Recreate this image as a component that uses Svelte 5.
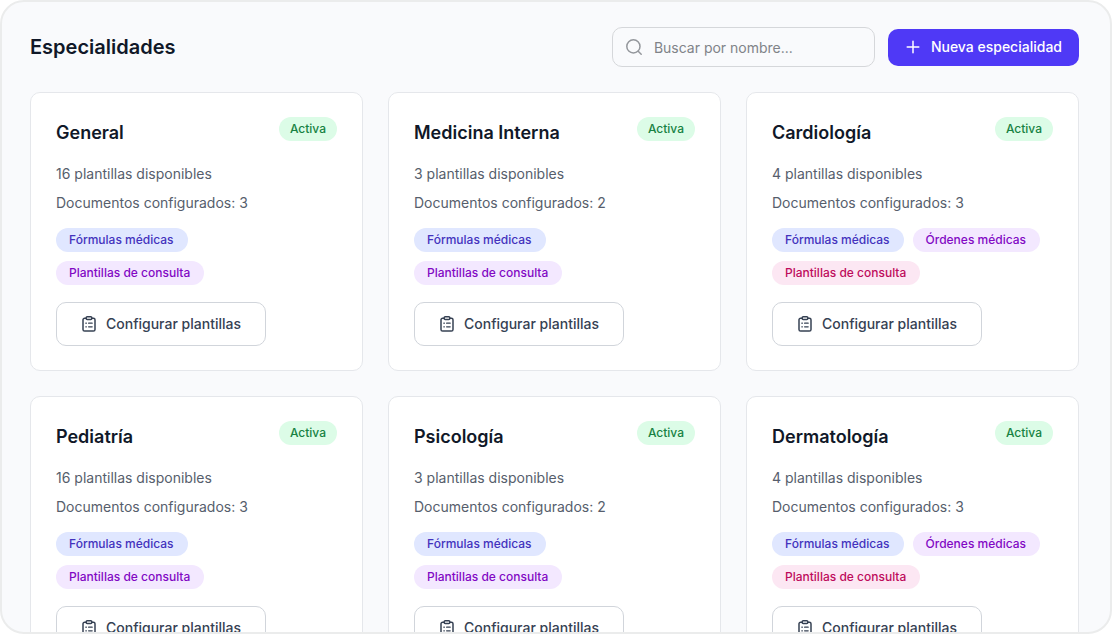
<script>
	let search = $state("");

	const formulas = { label: "Fórmulas médicas", color: "indigo" };
	const ordenes = { label: "Órdenes médicas", color: "purple" };
	const consulta = { label: "Plantillas de consulta", color: "purple" };
	const consultaPink = { label: "Plantillas de consulta", color: "pink" };

	const specialties = [
		{ name: "General", templates: 16, documents: 3, tags: [formulas, consulta] },
		{ name: "Medicina Interna", templates: 3, documents: 2, tags: [formulas, consulta] },
		{ name: "Cardiología", templates: 4, documents: 3, tags: [formulas, ordenes, consultaPink] },
		{ name: "Pediatría", templates: 16, documents: 3, tags: [formulas, consulta] },
		{ name: "Psicología", templates: 3, documents: 2, tags: [formulas, consulta] },
		{ name: "Dermatología", templates: 4, documents: 3, tags: [formulas, ordenes, consultaPink] },
	];

	let visible = $derived(
		specialties.filter((s) => s.name.toLowerCase().includes(search.toLowerCase()))
	);
</script>

<main class="panel">
	<header class="header">
		<h1 class="title">Especialidades</h1>
		<div class="actions">
			<label class="search">
				<svg class="search-icon" viewBox="0 0 18 18" aria-hidden="true">
					<circle cx="8.4" cy="8.4" r="6.6" />
					<path d="M13.2 13.2l3 3" />
				</svg>
				<input
					type="text"
					placeholder="Buscar por nombre..."
					aria-label="Buscar por nombre"
					bind:value={search}
				/>
			</label>
			<button class="new" type="button">
				<svg class="plus-icon" viewBox="0 0 14 14" aria-hidden="true">
					<path d="M7 1.2v11.6M1.2 7h11.6" />
				</svg>
				Nueva especialidad
			</button>
		</div>
	</header>

	<section class="grid">
		{#each visible as { name, templates, documents, tags }}
			<article class="card">
				<div class="card-head">
					<h2 class="name">{name}</h2>
					<span class="status">Activa</span>
				</div>
				<div class="info">
					<p>{templates} plantillas disponibles</p>
					<p>Documentos configurados: {documents}</p>
				</div>
				<div class="tags">
					{#each tags as tag}
						<span class="tag {tag.color}">{tag.label}</span>
					{/each}
				</div>
				<button class="configure" type="button">
					<svg class="clipboard-icon" viewBox="0 0 14 16" aria-hidden="true">
						<path d="M4.2 2.2H2.6A1.6 1.6 0 0 0 1 3.8v9.6A1.6 1.6 0 0 0 2.6 15h8.8a1.6 1.6 0 0 0 1.6-1.6V3.8a1.6 1.6 0 0 0-1.6-1.6H9.8" />
						<rect x="4.2" y="0.8" width="5.6" height="2.8" rx="1" />
						<path class="lines" d="M3.8 7.2h.6M6.6 7.2h3.6M3.8 10.8h.6M6.6 10.8h3.6" />
					</svg>
					Configurar plantillas
				</button>
			</article>
		{/each}
	</section>
</main>

<style>
	:global(body) {
		background: #fff;
	}

	.panel {
		box-sizing: border-box;
		height: 100vh;
		overflow: hidden;
		padding: 25px 31px 0 28px;
		border: 2px solid #ebecec;
		border-radius: 24px;
		background: #f9fafc;
		color: #101828;
		font-family: Inter, sans-serif;
	}

	h1,
	h2,
	p {
		margin: 0;
	}

	button,
	input {
		font-family: inherit;
	}

	.header {
		display: flex;
		align-items: center;
		justify-content: space-between;
		margin-bottom: 25px;
	}

	.title {
		font-size: 20px;
		line-height: 28px;
		font-weight: 600;
	}

	.actions {
		display: flex;
		align-items: center;
		gap: 13px;
	}

	.search {
		display: flex;
		align-items: center;
		gap: 11px;
		box-sizing: border-box;
		width: 263px;
		height: 40px;
		padding: 0 12px;
		border: 1px solid #d5d7da;
		border-radius: 10px;
	}

	.search input {
		flex: 1;
		min-width: 0;
		padding: 0;
		border: 0;
		outline: 0;
		background: none;
		color: #101828;
		font-size: 14px;
	}

	.search input::placeholder {
		color: #808388;
	}

	svg {
		flex: none;
		fill: none;
		stroke: currentColor;
		stroke-linecap: round;
		stroke-linejoin: round;
	}

	.search-icon {
		width: 18px;
		height: 18px;
		color: #94979c;
		stroke-width: 1.5;
	}

	.new {
		display: flex;
		align-items: center;
		gap: 11px;
		height: 37px;
		padding: 0 17px 1px 18px;
		border: 0;
		border-radius: 10px;
		background: #4f39f6;
		color: #fff;
		font-size: 14px;
		font-weight: 500;
	}

	.plus-icon {
		width: 14px;
		height: 14px;
		stroke-width: 1.5;
	}

	.grid {
		display: grid;
		grid-template-columns: repeat(3, 1fr);
		gap: 25px;
	}

	.card {
		padding: 24px 25px;
		border: 1px solid #e5e7eb;
		border-radius: 10px;
		background: #fff;
	}

	.card-head {
		display: flex;
		align-items: flex-start;
		justify-content: space-between;
		margin-bottom: 13px;
	}

	.name {
		font-size: 18px;
		line-height: 32px;
		font-weight: 600;
	}

	.status,
	.tag {
		border-radius: 12px;
		font-size: 12px;
		line-height: 24px;
		font-weight: 500;
	}

	.status {
		padding: 0 11px;
		background: #dcfce7;
		color: #178243;
	}

	.info {
		display: grid;
		gap: 5px;
		margin-bottom: 13px;
		color: #565e6c;
		font-size: 14px;
		line-height: 24px;
	}

	.tags {
		display: flex;
		flex-wrap: wrap;
		gap: 9px;
		margin-bottom: 17px;
	}

	.tag {
		padding: 0 14px 0 13px;
	}

	.indigo {
		background: #e0e7ff;
		color: #4332bd;
	}

	.purple {
		background: #f3e8ff;
		color: #8208c4;
	}

	.pink {
		background: #fce7f3;
		color: #be0b5c;
	}

	.configure {
		display: flex;
		align-items: center;
		gap: 10px;
		height: 44px;
		padding: 0 24px 1px 25px;
		border: 1px solid #d1d5db;
		border-radius: 10px;
		background: #fff;
		color: #364153;
		font-size: 14px;
		font-weight: 500;
	}

	.clipboard-icon {
		width: 14px;
		height: 16px;
		stroke-width: 1.5;
	}

	.lines {
		stroke-width: 1.2;
	}
</style>
